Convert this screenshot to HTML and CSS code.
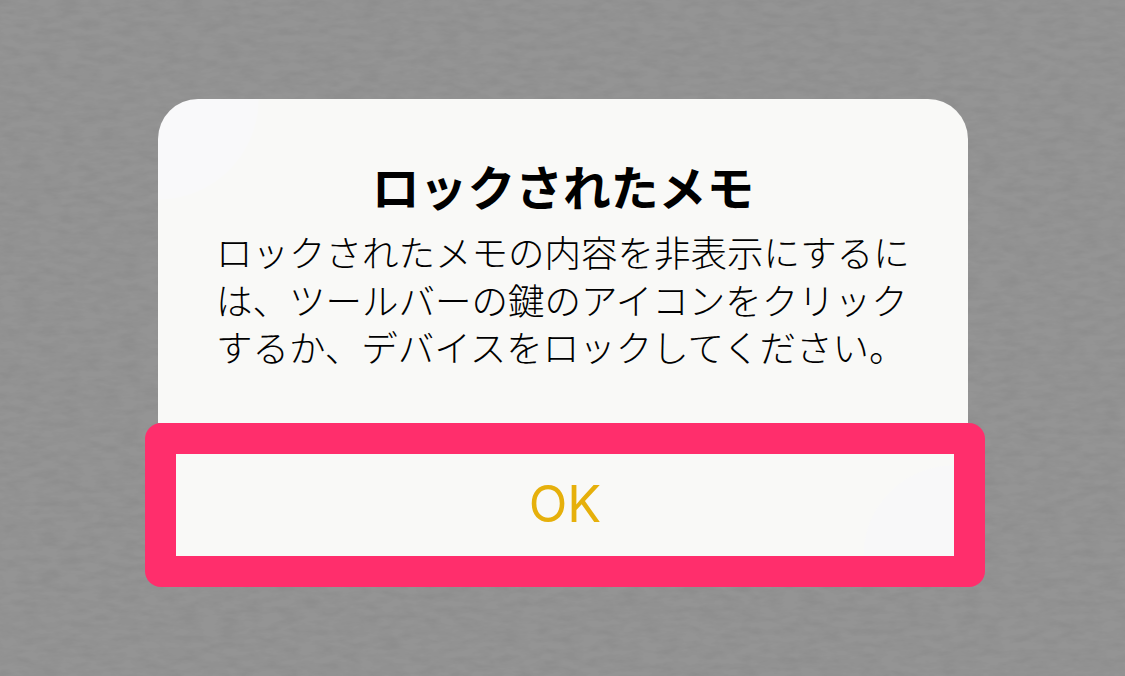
FILE: index.html
```html
<!DOCTYPE html>
<html lang="ja">
<head>
<meta charset="utf-8">
<title>ロックされたメモ</title>
<link rel="stylesheet" href="styles.css">
</head>
<body>
<svg class="paper" width="1125" height="676" aria-hidden="true">
  <filter id="grain" x="0" y="0" width="100%" height="100%">
    <feTurbulence type="fractalNoise" baseFrequency="0.05 0.14" numOctaves="3" seed="4"/>
    <feColorMatrix type="matrix" values="0 0 0 0 0  0 0 0 0 0  0 0 0 0 0  0.9 0 0 0 -0.3"/>
  </filter>
  <rect width="1125" height="676" filter="url(#grain)" opacity="0.09"/>
</svg>
<div class="alert">
  <div class="content">
    <h1 class="title">ロックされたメモ</h1>
    <p class="message">ロックされたメモの内容を非表示にするには、ツールバーの鍵のアイコンをクリックするか、デバイスをロックしてください。</p>
  </div>
  <div class="highlight">
    <button class="ok">OK</button>
  </div>
</div>
</body>
</html>
```
FILE: styles.css
```css
html, body { margin: 0; height: 100%; }
body {
  position: relative;
  width: 1125px;
  height: 676px;
  overflow: hidden;
  background: #949494;
  font-family: "Noto Sans CJK JP", "Noto Sans", sans-serif;
  display: flex;
  justify-content: flex-start;
  align-items: flex-start;
}
.paper {
  position: absolute;
  left: 0;
  top: 0;
}
.alert {
  position: relative;
  width: 810px;
  margin: 99px 0 0 158px;
  display: flex;
  flex-direction: column;
}
.content {
  flex: none;
  height: 324px;
  padding: 0 58px;
  box-sizing: border-box;
  border-radius: 40px 40px 0 0;
  background:
    radial-gradient(circle at 0 0, #f9f9fa 0, #f9f9fa 100px, rgba(249,249,247,0) 101px),
    #f9f9f7;
}
.title {
  margin: 0;
  padding-top: 58px;
  font-size: 47.8px;
  line-height: 58px;
  font-weight: 700;
  color: #000;
  text-align: center;
}
.message {
  margin: 13px 0 0;
  font-size: 36.5px;
  line-height: 47.5px;
  font-weight: 300;
  color: #000;
  word-break: break-all;
}
.highlight {
  flex: none;
  margin: 0 -17px 0 -13px;
  height: 164px;
  box-sizing: border-box;
  border-radius: 16px;
  background: #ff2e6c;
  padding: 31px;
}
.ok {
  display: block;
  width: 100%;
  height: 102px;
  border: 0;
  padding: 0 0 4px;
  background:
    radial-gradient(circle at 100% 100%, #f8f8f9 0, #f8f8f9 90px, rgba(249,249,247,0) 91px),
    #f9f9f7;
  color: #e6b00b;
  font-family: Inter, "Liberation Sans", sans-serif;
  font-size: 50.5px;
}
```
